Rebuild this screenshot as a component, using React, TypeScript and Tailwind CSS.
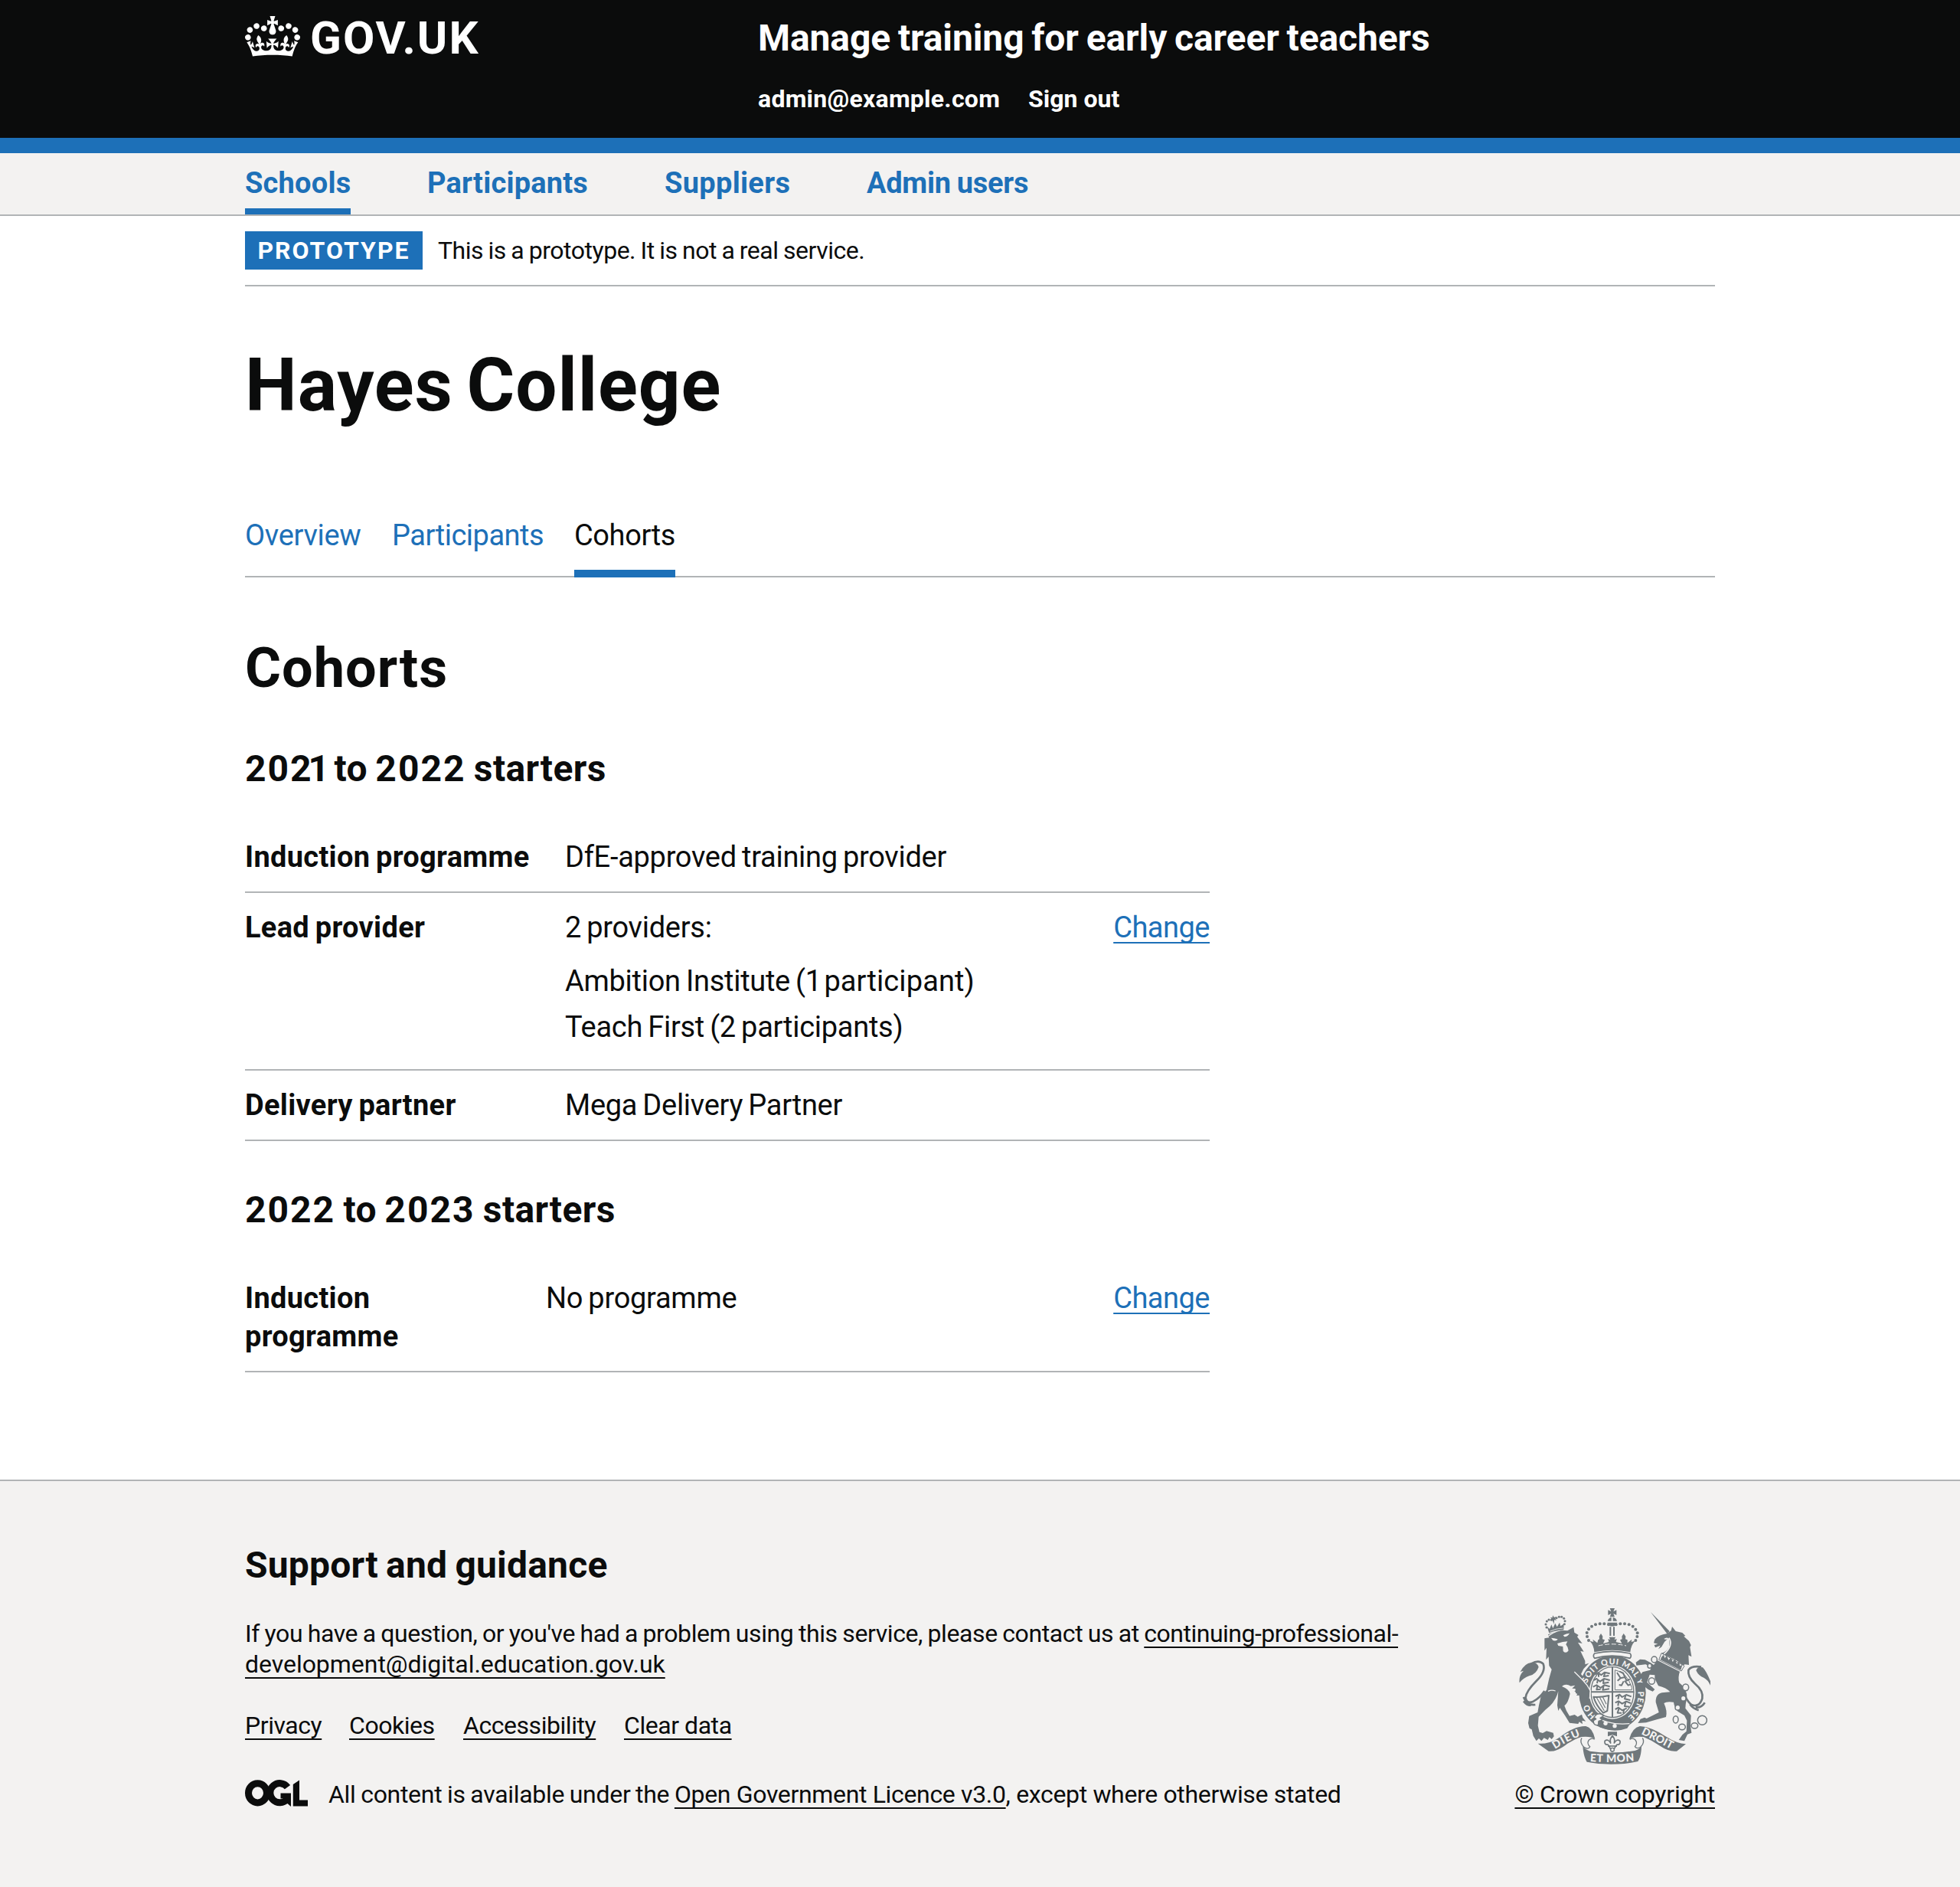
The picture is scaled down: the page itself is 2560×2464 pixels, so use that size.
import type { ReactNode } from "react";

const link =
  "underline decoration-2 underline-offset-[6px] [text-decoration-skip-ink:none]";

function CrownIcon() {
  return (
    <svg viewBox="0 0 132 97" className="mt-[1px] h-[53px] w-[72px] fill-white" aria-hidden="true">
      <path d="M25 30.2c3.5 1.5 7.7-.2 9.1-3.7 1.5-3.6-.2-7.8-3.9-9.2-3.6-1.4-7.6.3-9.1 3.9-1.4 3.5.3 7.5 3.9 9zM9 39.5c3.6 1.5 7.8-.2 9.2-3.7 1.5-3.6-.2-7.8-3.9-9.1-3.6-1.5-7.6.2-9.1 3.8-1.4 3.5.3 7.5 3.8 9zM4.4 57.2c3.5 1.5 7.7-.2 9.1-3.8 1.5-3.6-.2-7.7-3.9-9.1-3.5-1.5-7.6.3-9.1 3.8-1.4 3.5.3 7.6 3.9 9.1zm38.3-21.4c3.5 1.5 7.7-.2 9.1-3.8 1.5-3.6-.2-7.7-3.9-9.1-3.6-1.5-7.6.3-9.1 3.8-1.3 3.6.4 7.7 3.9 9.1zm64.4-5.6c-3.6 1.5-7.8-.2-9.1-3.7-1.5-3.6.2-7.8 3.8-9.2 3.6-1.4 7.7.3 9.2 3.9 1.3 3.5-.4 7.5-3.9 9zm15.9 9.3c-3.6 1.5-7.7-.2-9.1-3.7-1.5-3.6.2-7.8 3.7-9.1 3.6-1.5 7.7.2 9.2 3.8 1.5 3.5-.3 7.5-3.8 9zm4.7 17.7c-3.6 1.5-7.8-.2-9.2-3.8-1.5-3.6.2-7.7 3.9-9.1 3.6-1.5 7.7.3 9.2 3.8 1.3 3.5-.4 7.6-3.9 9.1zM89.3 35.8c-3.6 1.5-7.8-.2-9.2-3.8-1.4-3.6.2-7.7 3.9-9.1 3.6-1.5 7.7.3 9.2 3.8 1.4 3.6-.3 7.7-3.9 9.1zM69.7 17.7l8.9 4.7V9.3l-8.9 2.8c-.2-.3-.5-.6-.9-.9L72.4 0H59.6l3.5 11.2c-.3.3-.6.5-.9.9l-8.8-2.8v13.1l8.8-4.7c.3.3.6.7.9.9l-5 15.4v.1c-.2.8-.4 1.6-.4 2.4 0 4.1 3.1 7.5 7 8.1h.2c.3 0 .7.1 1 .1.4 0 .7 0 1-.1h.2c4-.6 7.1-4.1 7.1-8.1 0-.8-.1-1.7-.4-2.4V34l-5.1-15.4c.4-.2.7-.6 1-.9zM66 92.8c16.9 0 32.8 1.1 47.1 3.2 4-16.9 8.9-26.7 14-33.5l-9.6-3.4c1 4.9 1.1 7.2 0 10.2-1.5-1.4-3-4.3-4.2-8.7L108.6 76c2.8-2 5-3.2 7.5-3.3-4.4 9.4-10 11.9-13.6 11.2-4.3-.8-6.3-4.6-5.6-7.9 1-4.7 5.7-5.9 8-.5 4.3-8.7-3-11.4-7.6-8.8 7.1-7.2 7.9-13.5 2.1-21.1-8 6.1-8.1 12.3-4.5 20.8-4.7-5.4-12.1-2.5-9.5 6.2 3.4-5.2 7.9-2 7.2 3.1-.6 4.3-6.4 7.8-13.5 7.2-10.3-.9-10.9-8-11.2-13.8 2.5-.5 7.1 1.8 11 7.3L80.2 60c-4.1 4.4-8 5.3-12.3 5.4 1.4-4.4 8-11.6 8-11.6H55.5s6.4 7.2 7.9 11.6c-4.2-.1-8-1-12.3-5.4l1.4 16.4c3.9-5.5 8.5-7.7 10.9-7.3-.3 5.8-.9 12.8-11.1 13.8-7.2.6-12.9-2.9-13.5-7.2-.7-5 3.8-8.3 7.1-3.1 2.7-8.7-4.6-11.6-9.4-6.2 3.7-8.5 3.6-14.7-4.6-20.8-5.8 7.6-5 13.9 2.2 21.1-4.7-2.6-11.9.1-7.7 8.8 2.3-5.5 7.1-4.2 8.1.5.7 3.3-1.3 7.1-5.7 7.9-3.5.7-9-1.8-13.500-11.2 2.5.1 4.7 1.3 7.5 3.3l-4.7-15.4c-1.2 4.4-2.7 7.2-4.3 8.7-1.1-3-.9-5.3 0-10.2l-9.5 3.4c5 6.9 9.9 16.7 14 33.5 14.8-2.1 30.8-3.2 47.7-3.2z" />
    </svg>
  );
}

function OglIcon() {
  return (
    <svg viewBox="0 0 82 35" className="mt-[1px] h-[35px] w-[82px]" aria-hidden="true">
      <g fill="none" stroke="#0b0c0c" strokeWidth="9">
        <ellipse cx="16.5" cy="17.3" rx="12" ry="12.6" />
        <path d="M55.5 9.6A12.6 12.6 0 1 0 55 25.4" />
      </g>
      <path fill="#0b0c0c" d="M46.5 17.5H60V35l-4.2-3.8-8-4.2 4.6-2.6h-5.9zM62.8 6 71 .6V26.500h11V34.500H62.800z" />
    </svg>
  );
}

/* Bead positions along the arches of the central crown. */
const crownBeads = [
  [423, 124], [406, 121], [389, 121], [372, 124], [357, 131], [345, 142],
  [338, 156], [339, 171], [345, 186], [452, 124], [469, 121], [486, 121],
  [503, 124], [518, 131], [529, 143], [536, 157], [535, 171], [529, 186],
];

const lionCrownBeads = [
  [177, 123], [180, 135], [181, 111], [189, 105], [199, 106], [219, 98],
  [229, 94], [239, 94], [248, 100], [252, 110], [250, 122],
];

function RoyalArms() {
  return (
    <svg
      viewBox="72 60 750 612"
      className="h-[204px] w-[250px]"
      fill="#6f777b"
      stroke="none"
      strokeLinejoin="round"
      aria-hidden="true"
    >
      <defs>
        <path id="garter-left" d="M378 486A102 114 0 0 1 337 400" />
        <path id="garter-top" d="M338 358A101 111 0 0 1 438 280A101 111 0 0 1 540 366" />
        <path id="garter-right" d="M538 384A99 110 0 0 1 490 492" />
        <path id="motto-left" d="M213 612Q270 574 326 556" />
        <path id="motto-right" d="M550 552Q600 576 668 612" />
        <path id="motto-base" d="M350 660Q437 666 526 658" />
      </defs>

      {/* Lion */}
      <path d="M172 178L190 175L186 163Q220 144 262 148L286 134L289 155L305 165L300 172L320 198L303 194L326 230L313 228L331 266V280L346 275L325 298L315 318L337 345L350 380L347 415L338 400L335 419L325 402L315 416L311 401L297 402L305 389L289 386L300 376L280 374L292 362L275 365Q255 353 240 366Q270 378 272 395Q265 430 250 442L258 462L270 482L290 477L302 485L318 476L322 489L334 503L319 500L321 514L308 505L304 513L270 509L252 480L232 450L226 462L222 440L226 385Q215 430 175 458L149 485L146 520L152 545L165 549L180 541L206 548L209 562L200 573L191 565L185 576L170 568L160 580L150 570L140 580L128 560L122 535L113 530L108 510L112 482L145 468L150 440L158 405L180 380L190 335L200 300L190 285L188 250L178 262L180 215L172 226Z" />
      <path d="M74 352Q70 325 90 305L77 309Q95 275 120 273Q144 271 149 290Q140 318 112 325Q90 332 74 352Z" />
      <path d="M120 277Q150 260 167 278Q178 308 140 345Q100 385 98 410Q100 436 128 425Q152 413 172 384M90 408Q102 442 136 438M90 424Q104 442 118 440" fill="none" stroke="#6f777b" strokeWidth="8" />
      <g fill="#f3f2f1">
        <path d="M198 176Q212 176 224 182Q216 190 205 186ZM245 166Q258 158 270 158Q264 170 250 172Z" />
        <path d="M222 198Q244 190 262 190L256 202Q264 212 266 226Q256 240 245 228L244 210L226 207Z" />
      </g>
      <path d="M188 168Q215 146 258 141M186 385Q200 378 215 384" fill="none" stroke="#f3f2f1" strokeWidth="4" />

      {/* Lion's crown */}
      <path d="M190 157L182 132L192 141L199 124L205 138L214 119L221 133L231 116L235 130L248 121L247 145Q214 147 190 157Z" />
      <path d="M204 88L210 96L218 93L214 101L219 107L210 106L209 122L203 107L195 108L199 101L195 96L203 97Z" />
      {lionCrownBeads.map(([x, y]) => (
        <circle key={`${x}-${y}`} cx={x} cy={y} r="4.6" />
      ))}
      <path d="M194 150Q218 139 245 138" fill="none" stroke="#f3f2f1" strokeWidth="2.5" />

      {/* Central crown */}
      <path d="M428 60H447L442 73L454 67V87L442 81L447 94H428L433 81L421 87V67L433 73Z" />
      <path d="M419 110Q424 96 434 96V110ZM440 96Q452 97 456 110H440ZM418 116H457Q454 130 437 131Q421 130 418 116Z" />
      <path d="M427 133H433V168H427ZM441 133H447V168H441Z" />
      {crownBeads.map(([x, y]) => (
        <circle key={`${x}-${y}`} cx={x} cy={y} r="6" />
      ))}
      <path d="M367 232Q366 205 349 188L364 192L361 182L379 196L382 184L387 181L386 170L393 159L400 170L399 181L408 184L402 198L424 192L421 180L429 183L425 173H450L446 183L455 180L452 192L475 198L468 184L476 181L475 170L482 159L490 170L489 181L497 184L497 196L514 182L512 192L527 188Q510 205 508 232Q437 216 367 232Z" />
      <path d="M383 207Q437 194 492 207" fill="none" stroke="#f3f2f1" strokeWidth="3" strokeDasharray="18 8" />

      {/* Garter and shield */}
      <ellipse cx="438" cy="391" rx="131" ry="146" />
      <path d="M368 237Q437 221 507 237Q515 246 507 256Q437 237 368 256Q360 246 368 237Z" fill="#f3f2f1" stroke="#6f777b" strokeWidth="5" />
      <ellipse cx="438" cy="389" rx="91" ry="105" fill="#f3f2f1" />
      <ellipse cx="438" cy="389" rx="84" ry="99" fill="none" stroke="#6f777b" strokeWidth="4" />
      <path d="M435 290H441V486H435ZM354 385H522V391H354Z" />
      <g fill="none" stroke="#6f777b" strokeWidth="6">
        <path d="M370 320L382 312L394 322L407 311L428 316M384 314V329M410 312L404 327L424 324M364 342L376 336L390 347L405 336L428 342M381 338L378 354M404 338L402 354L424 350M362 368L376 361L392 372L406 361L428 367M380 362L376 379L392 377M404 363L400 380L426 376" />
        <path d="M450 405L466 398L476 408L492 399L512 406M464 400L460 416M490 401L486 415L508 420M449 430L462 424L476 434L492 425L510 432M462 426L460 442M490 427L486 444L504 446M449 456L462 449L476 460L494 452M464 452L458 470L474 470M484 456L480 472" />
        <path d="M456 312L470 334L487 330L494 344L506 338M470 334L458 344M487 330L480 314L466 308M482 346L474 362L464 360M486 344L500 362L510 358" />
      </g>
      <path d="M448 380V302Q494 310 514 370V380Z" fill="none" stroke="#6f777b" strokeWidth="3" />
      <path d="M364 407Q390 410 424 402L418 462L402 470Q374 440 364 407Z" fill="none" stroke="#6f777b" strokeWidth="6" />
      <path d="M376 410L406 462M388 409L410 450M400 407L414 436" stroke="#6f777b" strokeWidth="3.5" />
      <g fill="#f3f2f1" fontFamily="Lato, sans-serif" fontWeight="900" fontSize="32">
        <text>
          <textPath href="#garter-left" startOffset="6" textLength="56">HO</textPath>
        </text>
        <text>
          <textPath href="#garter-top" startOffset="4" textLength="272">SOIT QUI MAL Y</textPath>
        </text>
        <text>
          <textPath href="#garter-right" startOffset="2" textLength="112">PENSE</textPath>
        </text>
      </g>

      {/* Garter buckle and strap */}
      <path d="M366 486Q430 530 510 508L496 530Q438 552 380 520Z" />
      <path d="M364 484Q430 520 505 512" fill="none" stroke="#f3f2f1" strokeWidth="4" />
      <path d="M376 476Q394 468 403 482L390 490L398 498L384 502L382 518Q362 520 364 500L374 494L366 486Z" fill="#f3f2f1" stroke="#6f777b" strokeWidth="4" />
      <circle cx="411" cy="511" r="8" fill="#f3f2f1" />
      <circle cx="447" cy="521" r="8" fill="#f3f2f1" />

      {/* Lion's paw over the garter */}
      <path d="M289 318L318 338L340 366L350 384L347 413L338 404L334 420L324 406L316 416L308 400L294 392Z" />
      <path d="M289 309L322 342Q342 362 352 384L349 414" fill="none" stroke="#f3f2f1" strokeWidth="4" />

      {/* Unicorn */}
      <path d="M588 75L662 150L652 160Z" />
      <path d="M650 160L668 148L672 132L686 150L712 156L724 168L718 170L738 188L746 205L742 212L748 250L736 244L738 282L722 280L714 284Q690 262 668 254Q648 246 630 236Q648 232 660 212Q664 190 658 176L642 192L630 212L618 220L626 206L606 214L602 204L616 200L600 196L604 182Q620 164 650 160Z" />
      <path d="M640 180Q650 172 658 178Q650 186 640 180Z" fill="#f3f2f1" />
      <path d="M660 176Q678 206 640 240" fill="none" stroke="#f3f2f1" strokeWidth="5" />
      <path d="M630 236L720 286L708 306L620 262Z" fill="#f3f2f1" stroke="#6f777b" strokeWidth="3" />
      <path d="M630 252L638 242L644 256L650 244L658 263L668 252L674 270L684 258L690 278L700 268L702 286L712 282L706 302L626 262Z" />
      <path d="M614 264L702 308Q694 330 700 352Q732 376 730 412Q724 436 724 452L746 480L744 520L748 548L732 554L720 580L698 576L712 556L728 542L730 500L720 480L694 464Q680 446 678 428Q650 424 640 432Q654 462 648 486L612 496L570 508L538 510L548 494L564 488L572 492L620 468L608 428Q606 392 640 390L664 388Q650 372 618 364L604 336L604 322L584 320L574 350L604 378L596 386L578 378L560 364L548 322L556 310L586 302L590 290L568 280L532 284L530 272L546 260L566 262L588 274L600 282Z" />
      <path d="M822 362V346Q806 306 792 292Q772 286 766 304Q776 326 796 332Q812 340 822 362Z" />
      <path d="M786 290Q748 284 736 302Q732 330 762 356Q796 384 790 414Q778 450 748 438Q736 430 722 404M800 430Q786 452 764 448M776 460Q752 452 742 436" fill="none" stroke="#6f777b" strokeWidth="8" />
      <g fill="#f3f2f1" stroke="#6f777b" strokeWidth="4.5">
        <ellipse cx="602" cy="261" rx="11" ry="12" />
        <ellipse cx="592" cy="345" rx="12" ry="13" />
        <ellipse cx="584" cy="286" rx="8" ry="9" />
        <ellipse cx="725" cy="370" rx="12" ry="13" />
        <circle cx="716" cy="413" r="10" />
        <circle cx="694" cy="449" r="10" />
        <g fill="none">
          <ellipse cx="686" cy="496" rx="10" ry="14" />
          <ellipse cx="711" cy="525" rx="13" ry="11" />
          <ellipse cx="760" cy="520" rx="13" ry="11" />
          <circle cx="790" cy="499" r="18" />
        </g>
      </g>

      {/* Badge below the shield */}
      <path d="M420 544H456V562L438 556L420 562Z" />
      <path d="M438 560Q450 572 445 588Q456 570 468 580Q470 596 456 594L450 602L440 620H434L426 602L420 594Q406 596 408 580Q420 570 431 588Q426 572 438 560Z" fill="#f3f2f1" stroke="#6f777b" strokeWidth="5" />
      <path d="M420 600H456" stroke="#6f777b" strokeWidth="5" />
      <circle cx="438" cy="614" r="7" fill="#f3f2f1" stroke="#6f777b" strokeWidth="4" />

      {/* Motto ribbon */}
      <path d="M146 590Q190 594 230 566Q290 520 334 522Q360 528 370 572Q352 560 316 564Q290 572 262 590Q220 624 188 620Z" />
      <path d="M726 592Q690 590 650 564Q590 524 546 522Q516 528 504 572Q526 560 560 564Q590 576 622 598Q660 624 690 620Z" />
      <path d="M318 568Q308 584 326 604Q344 616 350 602Q336 590 346 576Q358 566 368 574M556 568Q566 584 550 602Q534 614 526 602Q538 590 528 576Q518 566 506 574" fill="none" stroke="#6f777b" strokeWidth="4" />
      <path d="M322 598Q326 612 350 620Q437 632 526 618Q548 610 552 596Q552 640 538 660Q437 682 338 662Q324 640 322 598Z" />
      <g fill="#f3f2f1" fontFamily="Lato, sans-serif" fontWeight="900" fontSize="42">
        <text>
          <textPath href="#motto-left" textLength="112">DIEU</textPath>
        </text>
        <text>
          <textPath href="#motto-right" textLength="132">DROIT</textPath>
        </text>
        <text>
          <textPath href="#motto-base" textLength="174">ET MON</textPath>
        </text>
      </g>
    </svg>
  );
}

function Header() {
  return (
    <header className="h-[200px] border-b-[20px] border-[#1d70b8] bg-[#0b0c0c] font-bold text-white">
      <div className="mx-auto flex w-[1920px]">
        <a className="flex w-[670px] items-start pt-5">
          <CrownIcon />
          <span className="ml-[13px] text-[60px] leading-[60px] tracking-[2px]">GOV.UK</span>
        </a>
        <div className="pt-5">
          <div className="text-[48px] leading-[60px] tracking-[-0.1px] [word-spacing:-2px]">
            Manage training for early career teachers
          </div>
          <div className="mt-[29px] flex gap-[37px] text-[32px] leading-[40px]">
            <span className="tracking-[0.25px]">admin@example.com</span>
            <span>Sign out</span>
          </div>
        </div>
      </div>
    </header>
  );
}

function PrimaryNav() {
  return (
    <nav className="h-[82px] border-b-2 border-[#b1b4b6] bg-[#f3f2f1]">
      <div className="mx-auto flex h-[80px] w-[1920px] gap-[100px] pt-[14px] text-[38px] leading-[50px] font-bold whitespace-nowrap text-[#1d70b8]">
        <a className="w-[138px] border-b-8 border-[#1d70b8] tracking-[0.2px]">Schools</a>
        <a className="w-[210px] tracking-[0.2px]">Participants</a>
        <a className="w-[164px] tracking-[0.3px]">Suppliers</a>
        <a className="tracking-[-0.3px] [word-spacing:-1px]">Admin users</a>
      </div>
    </nav>
  );
}

function Row({
  label,
  children,
  change = false,
  narrow = false,
}: {
  label: ReactNode;
  children: ReactNode;
  change?: boolean;
  narrow?: boolean;
}) {
  return (
    <div className="flex border-b-2 border-[#b1b4b6] py-5 [word-spacing:-2px]">
      <dt className={`${narrow ? "w-[393px]" : "w-[418px]"} shrink-0 font-bold tracking-[0.3px]`}>
        {label}
      </dt>
      <dd className="flex-1 tracking-[-0.28px]">{children}</dd>
      {change && (
        <dd className="tracking-[-0.5px]">
          <a className={`${link} text-[#1d70b8]`}>Change</a>
        </dd>
      )}
    </div>
  );
}

function Footer() {
  return (
    <footer className="h-[532px] border-t-2 border-[#b1b4b6] bg-[#f3f2f1] pt-[80px]">
      <div className="mx-auto flex w-[1920px] justify-between text-[32px] leading-[40px]">
        <div className="w-[1540px]">
          <h2 className="text-[48px] leading-[60px] font-bold tracking-[0.2px] [word-spacing:-2px]">
            Support and guidance
          </h2>
          <p className="mt-[39px] whitespace-nowrap">
            <span className="tracking-[-0.4px] [word-spacing:-1px]">
              If you have a question, or you've had a problem using this service, please contact us
              at{" "}
            </span>
            <a className={`${link} tracking-[-0.5px]`}>continuing-professional-</a>
            <br />
            <a className={`${link} tracking-[-0.04px]`}>development@digital.education.gov.uk</a>
          </p>
          <ul className="mt-10 flex tracking-[-0.45px] whitespace-nowrap">
            <li className="w-[136px]"><a className={link}>Privacy</a></li>
            <li className="w-[149px]"><a className={link}>Cookies</a></li>
            <li className="w-[210px]"><a className={link}>Accessibility</a></li>
            <li><a className={link}>Clear data</a></li>
          </ul>
          <div className="mt-[50px] flex whitespace-nowrap">
            <OglIcon />
            <p className="ml-[27px] tracking-[-0.34px]">
              <span className="tracking-[-0.3px] [word-spacing:-1px]">
                All content is available under the{" "}
              </span>
              <a className={link}>Open Government Licence v3.0</a>, except where otherwise stated
            </p>
          </div>
        </div>
        <div className="flex flex-col items-end pt-[86px]">
          <div className="mr-[6px]">
            <RoyalArms />
          </div>
          <a className={`${link} mt-[19px] tracking-[-0.2px] whitespace-nowrap`}>
            © Crown copyright
          </a>
        </div>
      </div>
    </footer>
  );
}

export default function App() {
  return (
    <div className="flex h-[2464px] w-[2560px] flex-col bg-white font-[Roboto,sans-serif] text-[#0b0c0c]">
      <Header />
      <PrimaryNav />
      <main className="mx-auto w-[1920px] flex-1">
        <div className="flex h-[92px] items-center border-b-2 border-[#b1b4b6] text-[32px] leading-[40px]">
          <strong className="flex h-[50px] w-[232px] items-center justify-center bg-[#1d70b8] tracking-[2px] text-white">
            PROTOTYPE
          </strong>
          <span className="ml-5 tracking-[-0.48px] [word-spacing:-1px]">
            This is a prototype. It is not a real service.
          </span>
        </div>
        <h1 className="mt-[79px] text-[96px] leading-[100px] font-bold tracking-[0.9px] [word-spacing:-7px]">
          Hayes College
        </h1>
        <div className="mt-[121px] flex h-[80px] gap-10 border-b-2 border-[#b1b4b6] text-[38px] leading-[50px] whitespace-nowrap text-[#1d70b8]">
          <a className="w-[152px] tracking-[-0.3px]">Overview</a>
          <a className="w-[198px] tracking-[-0.5px]">Participants</a>
          <a className="h-[80px] w-[132px] border-b-10 border-[#1d70b8] tracking-[-0.4px] text-[#0b0c0c]">
            Cohorts
          </a>
        </div>
        <div className="w-[1260px] text-[38px] leading-[50px]">
          <h2 className="mt-[79px] text-[72px] leading-[80px] font-bold tracking-[1px]">
            Cohorts
          </h2>
          <h3 className="mt-[61px] text-[48px] leading-[60px] font-bold tracking-[0.4px] [word-spacing:-2px]">
            <span className="tracking-[2px]">20</span>
            <span className="tracking-[-4px]">21</span> to{" "}
            <span className="tracking-[2px]">2022</span> starters
          </h3>
          <dl className="mt-10">
            <Row label="Induction programme">DfE-approved training provider</Row>
            <Row label="Lead provider" change>
              <p>2 providers:</p>
              <ul className="mt-5 mb-[10px] flex flex-col gap-[10px]">
                <li>
                  Ambition Institute (<span className="tracking-[-4px]">1</span>{" "}
                  <span className="tracking-[0.1px]">participant)</span>
                </li>
                <li>Teach First (2 participants)</li>
              </ul>
            </Row>
            <Row label="Delivery partner">Mega Delivery Partner</Row>
          </dl>
          <h3 className="mt-[60px] text-[48px] leading-[60px] font-bold tracking-[0.4px] [word-spacing:-2px]">
            <span className="tracking-[2px]">2022</span> to{" "}
            <span className="tracking-[2px]">2023</span> starters
          </h3>
          <dl className="mt-10">
            <Row narrow change label={<>Induction<br />programme</>}>
              No programme
            </Row>
          </dl>
        </div>
      </main>
      <Footer />
    </div>
  );
}
